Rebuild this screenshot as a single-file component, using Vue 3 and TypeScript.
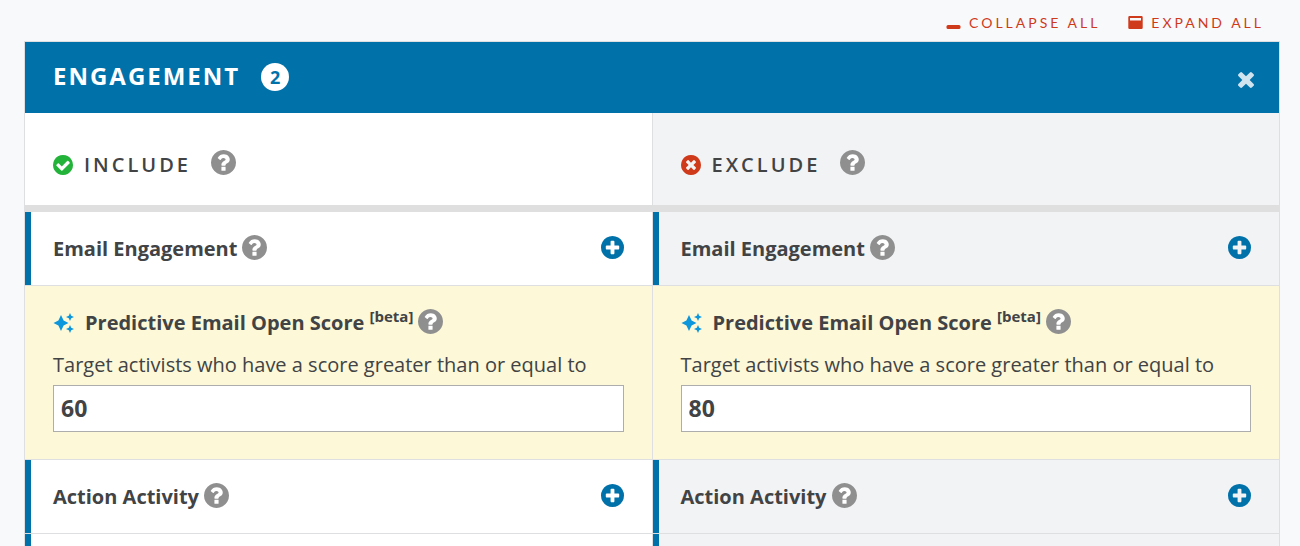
<script setup lang="ts">
import { ref } from 'vue'

interface Column {
  id: string
  title: string
  kind: 'include' | 'exclude'
}

const columns: Column[] = [
  { id: 'include', title: 'Include', kind: 'include' },
  { id: 'exclude', title: 'Exclude', kind: 'exclude' },
]

const scores = ref<Record<string, string>>({ include: '60', exclude: '80' })

const disc =
  'M1664 896q0 209-103 385.5t-279.5 279.5-385.5 103-385.5-103-279.5-279.5-103-385.5 103-385.5 279.5-279.5 385.5-103 385.5 103 279.5 279.5 103 385.5z'
const help =
  'M1024 1376v-192q0-14-9-23t-23-9h-192q-14 0-23 9t-9 23v192q0 14 9 23t23 9h192q14 0 23-9t9-23zm256-672q0-88-55.5-163t-138.5-116-170-41q-243 0-371 213-15 24 8 42l132 100q7 6 19 6 16 0 25-12 53-68 86-92 34-24 86-24 48 0 85.5 26t37.5 59q0 38-20 61t-68 45q-63 28-115.5 86.5t-52.5 125.5v36q0 14 9 23t23 9h192q14 0 23-9t9-23q0-19 21.5-49.5t54.5-49.5q32-18 49-28.5t46-35 44.5-48 28-60.5 12.5-81z'
const plus =
  'M1344 960v-128q0-26-19-45t-45-19h-256v-256q0-26-19-45t-45-19h-128q-26 0-45 19t-19 45v256h-256q-26 0-45 19t-19 45v128q0 26 19 45t45 19h256v256q0 26 19 45t45 19h128q26 0 45-19t19-45v-256h256q26 0 45-19t19-45z'
const check =
  'M1412 734q0-28-18-46l-91-90q-19-19-45-19t-45 19l-408 407-226-226q-19-19-45-19t-45 19l-91 90q-18 18-18 46 0 27 18 45l362 362q19 19 45 19 27 0 46-19l543-543q18-18 18-45z'
const cross =
  'M1277 1122q0-26-19-45l-181-181 181-181q19-19 19-45 0-27-19-46l-90-90q-19-19-46-19-26 0-45 19l-181 181-181-181q-19-19-45-19-27 0-46 19l-90 90q-19 19-19 46 0 26 19 45l181 181-181 181q-19 19-19 45 0 27 19 46l90 90q19 19 46 19 26 0 45-19l181-181 181 181q19 19 45 19 27 0 46-19l90-90q19-19 19-46z'
const close =
  'M1490 1322q0 40-28 68l-136 136q-28 28-68 28t-68-28l-294-294-294 294q-28 28-68 28t-68-28l-136-136q-28-28-28-68t28-68l294-294-294-294q-28-28-28-68t28-68l136-136q28-28 68-28t68 28l294 294 294-294q28-28 68-28t68 28l136 136q28 28 28 68t-28 68l-294 294 294 294q28 28 28 68z'
</script>

<template>
  <main class="page">
    <nav class="tools">
      <button type="button" class="tool">
        <svg class="tool-icon" viewBox="0 0 15 14" aria-hidden="true">
          <rect x="0.5" y="10" width="14" height="4" rx="1.5" />
        </svg>
        Collapse all
      </button>
      <button type="button" class="tool">
        <svg class="tool-icon" viewBox="0 0 15 14" aria-hidden="true">
          <path fill-rule="evenodd" d="M1.5 1h12a1.2 1.2 0 0 1 1.2 1.2v10.6a1.2 1.2 0 0 1-1.2 1.2h-12a1.2 1.2 0 0 1-1.2-1.2V2.2A1.2 1.2 0 0 1 1.5 1zM2 3v2.5h11V3z" />
        </svg>
        Expand all
      </button>
    </nav>

    <section class="panel">
      <header class="panel-head">
        <h2 class="panel-title">Engagement</h2>
        <span class="count">2</span>
        <button type="button" class="close" aria-label="Close">
          <svg viewBox="302 366 1188 1188" aria-hidden="true"><path :d="close" /></svg>
        </button>
      </header>

      <div class="columns">
        <div v-for="col in columns" :key="col.id" class="column" :class="col.kind">
          <div class="column-head">
            <svg class="status" viewBox="128 128 1536 1536" aria-hidden="true">
              <path :d="disc" />
              <path class="mark" :d="col.kind === 'include' ? check : cross" />
            </svg>
            <h3 class="column-title">{{ col.title }}</h3>
            <button type="button" class="help" :aria-label="`About ${col.title}`">
              <svg viewBox="128 128 1536 1536" aria-hidden="true"><path :d="disc" /><path class="mark" :d="help" /></svg>
            </button>
          </div>

          <div class="row">
            <h4 class="label">Email Engagement</h4>
            <button type="button" class="help" aria-label="About Email Engagement">
              <svg viewBox="128 128 1536 1536" aria-hidden="true"><path :d="disc" /><path class="mark" :d="help" /></svg>
            </button>
            <button type="button" class="add" aria-label="Add Email Engagement">
              <svg viewBox="128 128 1536 1536" aria-hidden="true"><path :d="disc" /><path class="mark" :d="plus" /></svg>
            </button>
          </div>

          <div class="score">
            <div class="score-head">
              <svg class="sparkle" viewBox="0 0 22 22" aria-hidden="true">
                <path d="M8 3L10.6 8.600L15.500 11L10.600 13.400L8 19L5.400 13.400L0.500 11L5.400 8.600zM17 1L18.200 3.800L21 5L18.200 6.200L17 9L15.800 6.200L13 5L15.800 3.800zM17 13L18.200 15.800L21 17L18.200 18.200L17 21L15.800 18.200L13 17L15.800 15.800z" />
              </svg>
              <h4 class="label">Predictive Email Open Score <sup>[beta]</sup></h4>
              <button type="button" class="help" aria-label="About Predictive Email Open Score">
                <svg viewBox="128 128 1536 1536" aria-hidden="true"><path :d="disc" /><path class="mark" :d="help" /></svg>
              </button>
            </div>
            <label class="hint" :for="`score-${col.id}`">Target activists who have a score greater than or equal to</label>
            <input :id="`score-${col.id}`" v-model="scores[col.id]" class="field" type="text" inputmode="numeric" />
          </div>

          <div class="row">
            <h4 class="label">Action Activity</h4>
            <button type="button" class="help" aria-label="About Action Activity">
              <svg viewBox="128 128 1536 1536" aria-hidden="true"><path :d="disc" /><path class="mark" :d="help" /></svg>
            </button>
            <button type="button" class="add" aria-label="Add Action Activity">
              <svg viewBox="128 128 1536 1536" aria-hidden="true"><path :d="disc" /><path class="mark" :d="plus" /></svg>
            </button>
          </div>

          <div class="row"></div>
        </div>
      </div>
    </section>
  </main>
</template>

<style>
body {
  background: #f8f9fb;
  overflow: hidden;
}
</style>

<style scoped>
.page {
  box-sizing: border-box;
  height: 100vh;
  overflow: hidden;
  padding: 0 20px 0 24px;
  font-family: 'Open Sans', 'Noto Sans', sans-serif;
  color: #414345;
}
h2, h3, h4 {
  margin: 0;
}
button {
  padding: 0;
  border: 0;
  background: none;
  cursor: pointer;
}
svg {
  display: block;
}
.tools {
  display: flex;
  justify-content: flex-end;
  align-items: center;
  gap: 28px;
  height: 41px;
  padding: 4px 16px 0 0;
  box-sizing: border-box;
}
.tool {
  display: flex;
  align-items: center;
  gap: 8px;
  font: 14px/20px Lato, sans-serif;
  letter-spacing: 3px;
  text-transform: uppercase;
  color: #cf3a1b;
}
.tool-icon {
  width: 15px;
  height: 14px;
  margin-bottom: 2px;
  fill: #cf3a1b;
}
.panel {
  border: 1px solid #dedfe1;
  background: #fff;
}
.panel-head {
  display: flex;
  align-items: center;
  height: 71px;
  padding: 0 25px 2px 28px;
  box-sizing: border-box;
  background: #0071a9;
  color: #fff;
}
.panel-title {
  margin-bottom: 2px;
  font-size: 24px;
  line-height: 32px;
  font-weight: 700;
  letter-spacing: 2px;
  text-transform: uppercase;
}
.count {
  width: 28px;
  height: 28px;
  margin-left: 21px;
  border-radius: 50%;
  background: #fff;
  color: #0071a9;
  font-size: 18px;
  line-height: 28px;
  font-weight: 700;
  text-align: center;
}
.close {
  margin: 6px 0 0 auto;
}
.close svg {
  width: 16px;
  height: 16px;
  fill: #d0e4ef;
}
.columns {
  display: grid;
  grid-template-columns: 1fr 1fr;
  gap: 1px;
  background: #dedfe1;
}
.column {
  --surface: #fff;
  background: var(--surface);
}
.exclude {
  --surface: #f2f3f5;
}
.column-head {
  display: flex;
  align-items: center;
  height: 99px;
  padding: 8px 28px 0;
  box-sizing: border-box;
  border-bottom: 7px solid #dfdfdf;
}
.status {
  width: 20px;
  height: 20px;
  margin-top: 4px;
  fill: #23b33a;
}
.exclude .status {
  fill: #cf3a1b;
}
.column-head .status .mark {
  fill: var(--surface);
}
.column-title {
  margin: 4px 20px 0 11px;
  font-size: 20px;
  line-height: 28px;
  font-weight: 600;
  letter-spacing: 3px;
  text-transform: uppercase;
}
.help {
  flex: none;
  margin-bottom: 3px;
}
.column-head .help {
  margin-bottom: 1px;
}
.help svg {
  width: 25px;
  height: 25px;
  fill: #8f8f8f;
}
.help .mark {
  fill: #fff;
}
.row {
  display: flex;
  align-items: center;
  gap: 5px;
  height: 74px;
  padding: 0 28px;
  box-sizing: border-box;
  box-shadow: inset 6px 0 0 #0071a9;
  border-bottom: 1px solid #dedfe1;
}
.label {
  font-size: 20px;
  line-height: 28px;
  font-weight: 700;
}
.add {
  margin: 0 0 3px auto;
}
.add svg {
  width: 23px;
  height: 23px;
  fill: #0071a9;
}
.add .mark {
  fill: var(--surface);
}
.score {
  padding: 23px 28px 27px;
  background: #fcf8d8;
  border-bottom: 1px solid #dedfe1;
}
.score-head {
  display: flex;
  align-items: center;
  gap: 5px;
}
.sparkle {
  width: 22px;
  height: 22px;
  margin-right: 5px;
  fill: #0c96dc;
}
sup {
  font-size: 15px;
  line-height: 0;
}
.hint {
  display: block;
  margin-top: 14px;
  font-size: 20px;
  line-height: 28px;
}
.field {
  display: block;
  width: 100%;
  height: 47px;
  margin-top: 6px;
  padding: 0 7px 2px;
  box-sizing: border-box;
  border: 1px solid #adadad;
  border-radius: 0;
  background: #fff;
  font: 700 23px/30px 'Open Sans', 'Noto Sans', sans-serif;
  color: #414345;
}
</style>
